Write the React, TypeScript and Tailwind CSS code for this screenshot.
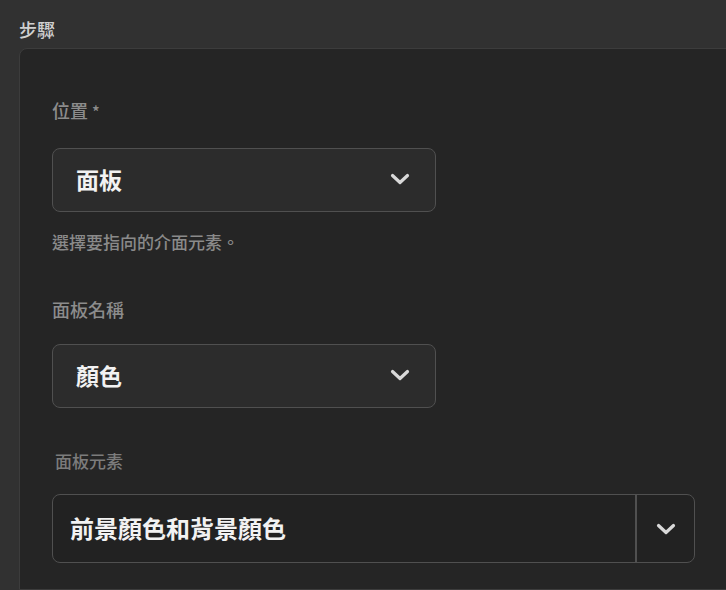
import React from "react";

const font = { fontFamily: '"Noto Sans CJK TC", "Noto Sans", sans-serif' };

function Chevron({ w = 20 }: { w?: number }) {
  return (
    <svg width={w} height={w / 2 + 2} viewBox="0 0 20 12" fill="none">
      <path d="M2.5 2.5 L10 9.5 L17.5 2.5" stroke="#d9d9d9" strokeWidth="3.2" strokeLinecap="round" strokeLinejoin="round" />
    </svg>
  );
}

function Select({ value }: { value: string }) {
  return (
    <div className="flex h-[64px] w-[384px] items-center justify-between rounded-[8px] border-[1.5px] border-[#505050] bg-[#2c2c2c] pb-[2px] pl-[23px] pr-[25px]">
      <span className="text-[23px] font-bold leading-none text-[#f2f2f2]">{value}</span>
      <Chevron />
    </div>
  );
}

export default function App() {
  return (
    <div className="flex h-[590px] w-[726px] flex-col overflow-hidden bg-[#313131]" style={font}>
      <div className="pl-[19px] pt-[17px] text-[18px] font-medium leading-[24px] text-[#d0d0d0]">步驟</div>
      <div className="ml-[19px] mr-[-10px] mt-[7px] flex flex-1 flex-col rounded-tl-[8px] border border-[#3c3c3c] bg-[#252525] pl-[32px] pt-[49px]">
        <div className="text-[18px] font-medium leading-[24px] text-[#8c8c8c]">
          位置 <span className="text-[16px]">*</span>
        </div>
        <div className="mt-[25px]">
          <Select value="面板" />
        </div>
        <div className="mt-[18px] text-[17px] font-medium leading-[24px] text-[#8a8a8a]">選擇要指向的介面元素。</div>
        <div className="mt-[43px] text-[18px] font-medium leading-[24px] text-[#8c8c8c]">面板名稱</div>
        <div className="mt-[23px]">
          <Select value="顏色" />
        </div>
        <div className="mt-[41px] pl-[3px] text-[17px] font-medium leading-[24px] text-[#7c7c7c]">面板元素</div>
        <div className="mt-[21px] flex h-[69px] w-[643px] rounded-[8px] border-[1.5px] border-[#505050] bg-[#222222]">
          <div className="flex flex-1 items-center border-r-2 border-[#505050] pb-[2px] pl-[17px]">
            <span className="text-[24px] font-bold leading-none text-[#f2f2f2]">前景顏色和背景顏色</span>
          </div>
          <div className="flex w-[57px] items-center justify-center">
            <Chevron w={20} />
          </div>
        </div>
      </div>
    </div>
  );
}
